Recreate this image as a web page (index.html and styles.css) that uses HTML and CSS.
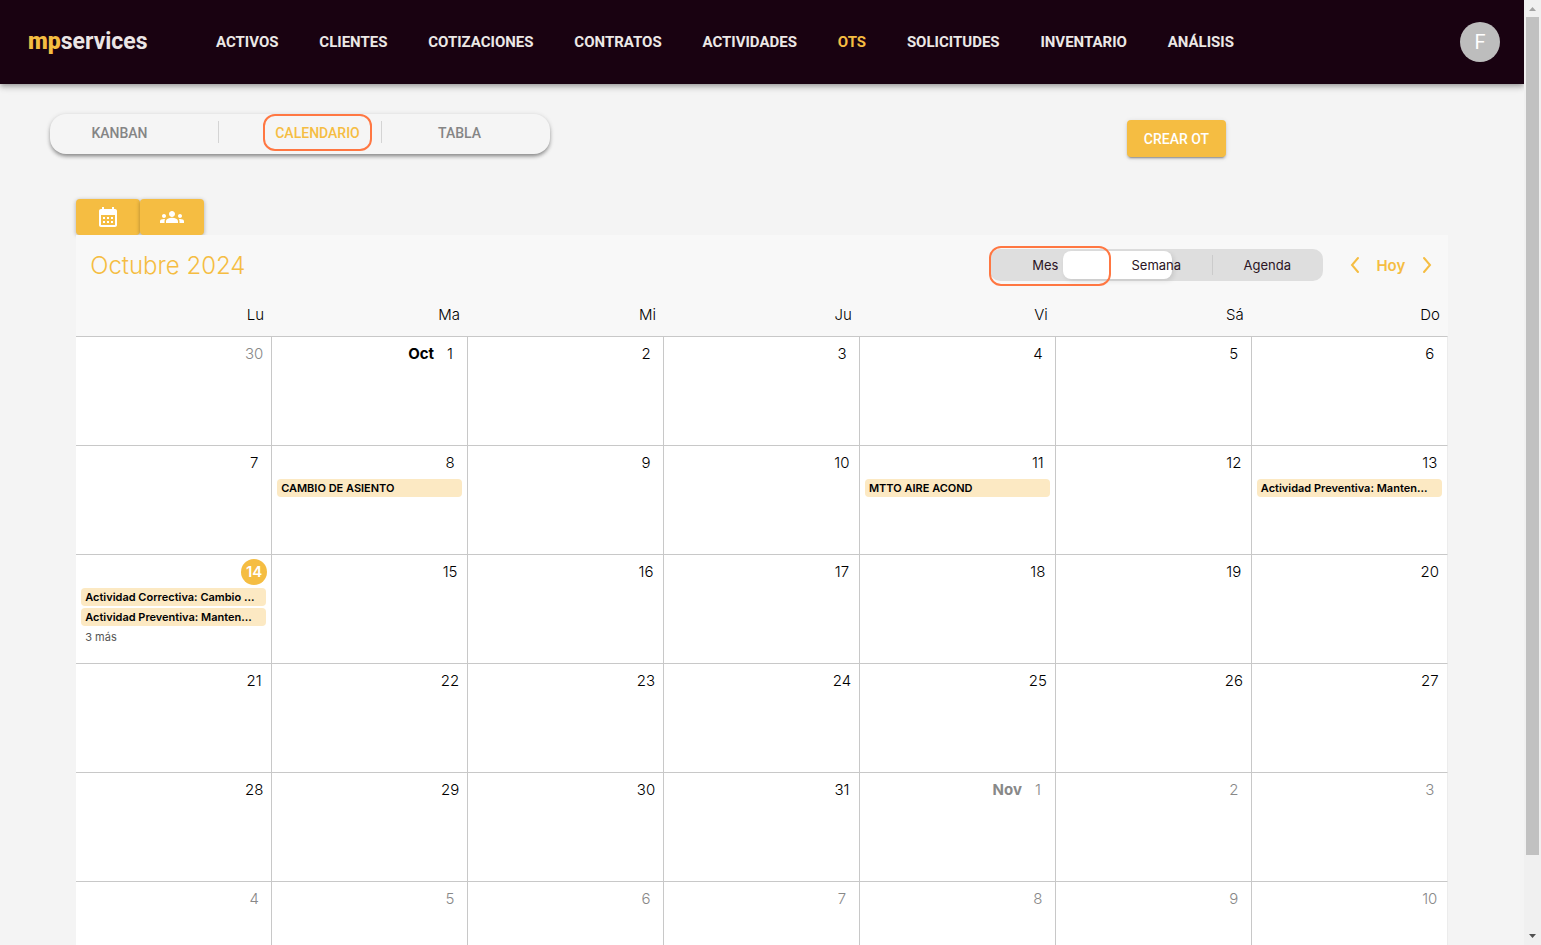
FILE: index.html
```html
<!DOCTYPE html>
<html lang="es">
<head>
<meta charset="utf-8">
<meta name="viewport" content="width=device-width, initial-scale=1">
<title>mpservices - OTS</title>
<link rel="stylesheet" href="styles.css">
</head>
<body>
<div class="page">
  <header class="topbar">
    <a class="logo" href="#"><span class="logo-mark">mp</span>services</a>
    <nav class="nav">
      <a href="#">ACTIVOS</a>
      <a href="#">CLIENTES</a>
      <a href="#">COTIZACIONES</a>
      <a href="#">CONTRATOS</a>
      <a href="#">ACTIVIDADES</a>
      <a class="current" href="#">OTS</a>
      <a href="#">SOLICITUDES</a>
      <a href="#">INVENTARIO</a>
      <a href="#">ANÁLISIS</a>
    </nav>
    <button class="avatar" type="button">F</button>
  </header>

  <main>
    <div class="toolbar">
      <div class="tabs">
        <button class="tab" type="button">KANBAN</button>
        <span class="tab-line"></span>
        <button class="tab tab-active" type="button">CALENDARIO</button>
        <span class="tab-line"></span>
        <button class="tab tab-last" type="button">TABLA</button>
      </div>
      <button class="create" type="button">CREAR OT</button>
    </div>

    <section class="calendar">
      <div class="modes">
        <button class="mode" type="button" aria-label="Calendario">
          <svg viewBox="0 0 24 24"><path d="M19 4h-1V2h-2v2H8V2H6v2H5c-1.110 0-1.990.9-1.990 2L3 20c0 1.100.89 2 2 2h14c1.100 0 2-.9 2-2V6c0-1.100-.9-2-2-2zm0 16H5V10h14v10zM9 14H7v-2h2v2zm4 0h-2v-2h2v2zm4 0h-2v-2h2v2zm-8 4H7v-2h2v2zm4 0h-2v-2h2v2zm4 0h-2v-2h2v2z"/></svg>
        </button>
        <button class="mode" type="button" aria-label="Equipo">
          <svg viewBox="0 0 24 24"><path d="M12 12.750c1.630 0 3.070.39 4.240.9 1.080.48 1.760 1.560 1.760 2.730V18H6v-1.610c0-1.180.68-2.260 1.760-2.730 1.170-.52 2.610-.91 4.240-.91zM4 13c1.100 0 2-.9 2-2s-.9-2-2-2-2 .9-2 2 .9 2 2 2zm1.130 1.100C4.760 14.040 4.390 14 4 14c-.99 0-1.930.21-2.780.58C.48 14.900 0 15.620 0 16.430V18h4.500v-1.610c0-.83.23-1.610.63-2.290zM20 13c1.100 0 2-.9 2-2s-.9-2-2-2-2 .9-2 2 .9 2 2 2zm4 3.430c0-.81-.48-1.530-1.220-1.850-.85-.37-1.790-.58-2.780-.58-.39 0-.76.04-1.130.1.400.68.630 1.460.630 2.290V18H24v-1.570zM12 6c1.660 0 3 1.340 3 3s-1.340 3-3 3-3-1.340-3-3 1.340-3 3-3z"/></svg>
        </button>
      </div>

      <div class="panel">
        <div class="panel-head">
          <h1>Octubre 2024</h1>
          <div class="segment">
            <span class="pill"></span>
            <label class="option option-picked"><input type="radio" name="view" checked><span>Mes</span></label>
            <label class="option"><input type="radio" name="view"><span>Semana</span></label>
            <label class="option option-line"><input type="radio" name="view"><span>Agenda</span></label>
          </div>
          <div class="pager">
            <button type="button" aria-label="Anterior"><svg viewBox="0 0 10 18"><path d="M8 2L2 9l6 7"/></svg></button>
            <button type="button">Hoy</button>
            <button type="button" aria-label="Siguiente"><svg viewBox="0 0 10 18"><path d="M2 2l6 7-6 7"/></svg></button>
          </div>
        </div>

        <table class="month">
          <thead>
            <tr><th>Lu</th><th>Ma</th><th>Mi</th><th>Ju</th><th>Vi</th><th>Sá</th><th>Do</th></tr>
          </thead>
          <tbody>
            <tr>
              <td class="other"><div class="day"><span>30</span></div></td>
              <td><div class="day"><b>Oct</b><span>1</span></div></td>
              <td><div class="day"><span>2</span></div></td>
              <td><div class="day"><span>3</span></div></td>
              <td><div class="day"><span>4</span></div></td>
              <td><div class="day"><span>5</span></div></td>
              <td><div class="day"><span>6</span></div></td>
            </tr>
            <tr>
              <td><div class="day"><span>7</span></div></td>
              <td><div class="day"><span>8</span></div><button class="event" type="button">CAMBIO DE ASIENTO</button></td>
              <td><div class="day"><span>9</span></div></td>
              <td><div class="day"><span>10</span></div></td>
              <td><div class="day"><span>11</span></div><button class="event" type="button">MTTO AIRE ACOND</button></td>
              <td><div class="day"><span>12</span></div></td>
              <td><div class="day"><span>13</span></div><button class="event" type="button">Actividad Preventiva: Manten...</button></td>
            </tr>
            <tr>
              <td><div class="day"><span class="today">14</span></div><button class="event" type="button">Actividad Correctiva: Cambio ...</button><button class="event" type="button">Actividad Preventiva: Manten...</button><button class="more" type="button">3 más</button></td>
              <td><div class="day"><span>15</span></div></td>
              <td><div class="day"><span>16</span></div></td>
              <td><div class="day"><span>17</span></div></td>
              <td><div class="day"><span>18</span></div></td>
              <td><div class="day"><span>19</span></div></td>
              <td><div class="day"><span>20</span></div></td>
            </tr>
            <tr>
              <td><div class="day"><span>21</span></div></td>
              <td><div class="day"><span>22</span></div></td>
              <td><div class="day"><span>23</span></div></td>
              <td><div class="day"><span>24</span></div></td>
              <td><div class="day"><span>25</span></div></td>
              <td><div class="day"><span>26</span></div></td>
              <td><div class="day"><span>27</span></div></td>
            </tr>
            <tr>
              <td><div class="day"><span>28</span></div></td>
              <td><div class="day"><span>29</span></div></td>
              <td><div class="day"><span>30</span></div></td>
              <td><div class="day"><span>31</span></div></td>
              <td class="other"><div class="day"><b>Nov</b><span>1</span></div></td>
              <td class="other"><div class="day"><span>2</span></div></td>
              <td class="other"><div class="day"><span>3</span></div></td>
            </tr>
            <tr>
              <td class="other"><div class="day"><span>4</span></div></td>
              <td class="other"><div class="day"><span>5</span></div></td>
              <td class="other"><div class="day"><span>6</span></div></td>
              <td class="other"><div class="day"><span>7</span></div></td>
              <td class="other"><div class="day"><span>8</span></div></td>
              <td class="other"><div class="day"><span>9</span></div></td>
              <td class="other"><div class="day"><span>10</span></div></td>
            </tr>
          </tbody>
        </table>
      </div>
    </section>
  </main>
</div>
<div class="scrollbar" aria-hidden="true">
  <svg class="scroll-arrow scroll-up" viewBox="0 0 17 17"><path d="M5 11h7L8.500 7z"/></svg>
  <div class="track"><div class="thumb"></div></div>
  <svg class="scroll-arrow" viewBox="0 0 17 17"><path d="M5 6h7l-3.500 4z"/></svg>
</div>
</body>
</html>
```

FILE: styles.css
```css
* { box-sizing: border-box; }

body {
  margin: 0;
  height: 100vh;
  display: flex;
  overflow: hidden;
  background: #f4f4f4;
  color: #000;
  font-family: Inter, "Open Sans", sans-serif;
}

button {
  margin: 0;
  padding: 0;
  border: 0;
  background: none;
  color: inherit;
  font: inherit;
  cursor: pointer;
}

.page { flex: 1; min-width: 0; overflow: hidden; }

.topbar {
  display: flex;
  align-items: center;
  height: 84px;
  padding: 0 24px 0 28px;
  background: #190211;
  box-shadow: 0 2px 4px -1px rgba(0,0,0,.2), 0 4px 5px rgba(0,0,0,.14), 0 1px 10px rgba(0,0,0,.12);
}

.logo {
  width: 188px;
  padding-bottom: 2px;
  color: #ebe5e5;
  font-family: Roboto, sans-serif;
  font-size: 23px;
  font-weight: 700;
  text-decoration: none;
}
.logo-mark { color: #f5bd42; font-weight: 900; }

.nav {
  flex: 1;
  display: flex;
  justify-content: space-between;
  max-width: 1018px;
}
.nav a {
  color: #ece8e6;
  font-family: Roboto, sans-serif;
  font-size: 15px;
  font-weight: 700;
  text-decoration: none;
}
.nav .current { color: #f5bd42; }

.avatar {
  width: 40px;
  height: 40px;
  margin-left: auto;
  border-radius: 50%;
  background: #bdbdbd;
  color: #fff;
  font-family: Roboto, sans-serif;
  font-size: 20px;
}

.toolbar {
  display: flex;
  justify-content: space-between;
  padding: 30px 298px 0 50px;
}

.tabs {
  display: flex;
  width: 500px;
  height: 40px;
  border-radius: 16px;
  background: #f5f5f5;
  box-shadow: 0 3px 4px -1px rgba(0,0,0,.4), 0 1px 5px rgba(0,0,0,.16);
}
.tab {
  width: 139px;
  height: 37px;
  color: #858585;
  font-family: Roboto, sans-serif;
  font-size: 14px;
  font-weight: 500;
}
.tab-line {
  width: 1px;
  height: 22px;
  margin: 7px 44px 0 29px;
  background: #d4d4d4;
}
.tab-active {
  width: 109px;
  border: 2px solid #ff7742;
  border-radius: 12px;
  color: #f5bd42;
}
.tab-active + .tab-line { margin: 7px 8px 0 9px; }

.create {
  width: 99px;
  height: 37px;
  margin-top: 6px;
  border-radius: 4px;
  background: #f5bd42;
  color: #fff;
  font-family: Roboto, sans-serif;
  font-size: 14px;
  font-weight: 500;
  box-shadow: 0 3px 1px -2px rgba(0,0,0,.2), 0 2px 2px rgba(0,0,0,.14), 0 1px 5px rgba(0,0,0,.12);
}

.calendar { padding: 42px 5% 0; }

.modes { display: flex; }
.mode {
  display: flex;
  align-items: center;
  justify-content: center;
  width: 64px;
  height: 36px;
  border-radius: 4px;
  background: #f5bd42;
  box-shadow: 0 1px 4px rgba(0,0,0,.3);
}
.mode svg { width: 24px; height: 24px; fill: #fff; }

.panel { position: relative; background: #f8f8f8; }

.panel-head {
  display: flex;
  align-items: center;
  height: 60px;
  padding: 0 16px 0 14px;
}
.panel-head h1 {
  margin: 0 auto 0 0;
  color: #f5bd42;
  font-size: 24px;
  font-weight: 300;
}

.segment {
  position: relative;
  display: flex;
  width: 333px;
  height: 32px;
  border-radius: 10px;
  background: #dedede;
}
.option {
  position: relative;
  display: flex;
  flex: 1;
  align-items: center;
  justify-content: center;
  color: #2b1424;
  font-size: 13px;
}
.option input {
  position: absolute;
  opacity: 0;
}
.option-picked::after {
  content: "";
  position: absolute;
  inset: -3px -10px -5px -1px;
  border: 2px solid #ff7742;
  border-radius: 12px;
}
.option-line::before {
  content: "";
  position: absolute;
  left: 0;
  top: 6px;
  bottom: 6px;
  width: 1px;
  background: #cbcbcb;
}
.pill {
  position: absolute;
  left: 73px;
  top: 2px;
  width: 109px;
  height: 28px;
  border-radius: 8px;
  background: #fff;
  box-shadow: 2px 2px 5px rgba(0,0,0,.1);
}

.pager {
  display: flex;
  align-items: center;
  justify-content: space-between;
  width: 82px;
  margin-left: 27px;
  color: #f5bd42;
  font-size: 15px;
  font-weight: 600;
}
.pager svg {
  display: block;
  width: 10px;
  height: 18px;
  fill: none;
  stroke: #f5bd42;
  stroke-width: 2;
  stroke-linecap: round;
}

.month {
  width: 100%;
  table-layout: fixed;
  border-collapse: separate;
  border-spacing: 0;
}
.month th {
  height: 41px;
  padding: 0 8px 3px 0;
  font-size: 15px;
  font-weight: 300;
  text-align: right;
}
.month td {
  height: 109px;
  padding: 4px 4px 0 5px;
  border-top: 1px solid #c8c8c8;
  border-right: 1px solid #c8c8c8;
  background: #fff;
  vertical-align: top;
}
.month td:last-child { border-right-color: #ececec; }

.day {
  display: flex;
  justify-content: flex-end;
  gap: 3px;
  height: 29px;
  font-size: 15px;
  font-weight: 300;
  line-height: 26px;
}
.day b { font-weight: 700; }
.day span {
  width: 26px;
  height: 26px;
  border-radius: 50%;
  text-align: center;
}
.day .today { background: #f5bd42; color: #fff; font-weight: 600; }
.month .other { color: #888; }

.event {
  display: block;
  width: calc(100% - 1px);
  height: 18px;
  margin-bottom: 2px;
  padding: 0 4px;
  overflow: hidden;
  border-radius: 4px;
  background: #fce9c3;
  font-size: 11px;
  font-weight: 600;
  line-height: 18px;
  text-align: left;
  white-space: nowrap;
}
.more {
  display: block;
  padding: 0 4px;
  color: #555;
  font-size: 11px;
  line-height: 18px;
}

.scrollbar {
  display: flex;
  flex-direction: column;
  width: 17px;
  background: #f0f0f0;
}
.scroll-arrow { width: 17px; height: 17px; fill: #505050; }
.scroll-up { fill: #a3a3a3; }
.track { flex: 1; padding: 0 2px; }
.thumb { height: 92%; background: #c1c1c1; }
```
